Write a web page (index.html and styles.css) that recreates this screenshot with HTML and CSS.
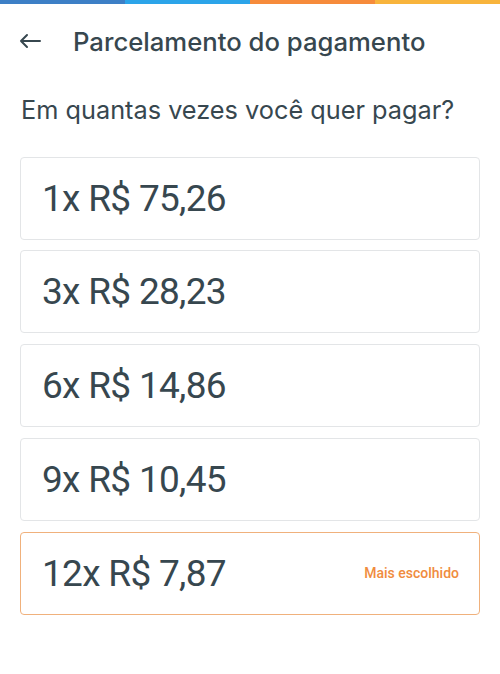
FILE: index.html
```html
<!DOCTYPE html>
<html lang="pt-BR">
<head>
    <meta charset="UTF-8">
    <meta name="viewport" content="width=device-width, initial-scale=1.0">
    <title>Parcelamento do pagamento</title>
    <link rel="stylesheet" href="styles.css">
</head>
<body>
    <div class="progress">
        <span class="seg seg-1"></span>
        <span class="seg seg-2"></span>
        <span class="seg seg-3"></span>
        <span class="seg seg-4"></span>
    </div>
    <header class="header">
        <button class="back" aria-label="Voltar">
            <svg width="22" height="22" viewBox="0 0 22 22">
                <path d="M21 11H2M8 5l-6 6 6 6" fill="none" stroke="#37474f" stroke-width="2" stroke-linecap="round" stroke-linejoin="round"/>
            </svg>
        </button>
        <h1 class="title">Parcelamento do pagamento</h1>
    </header>
    <main class="content">
        <h2 class="question">Em quantas vezes você quer pagar?</h2>
        <div class="options">
            <div class="option"><span class="amount">1x R$ 75,26</span></div>
            <div class="option"><span class="amount">3x R$ 28,23</span></div>
            <div class="option"><span class="amount">6x R$ 14,86</span></div>
            <div class="option"><span class="amount">9x R$ 10,45</span></div>
            <div class="option featured">
                <span class="amount">12x R$ 7,87</span>
                <span class="tag">Mais escolhido</span>
            </div>
        </div>
    </main>
</body>
</html>
```

FILE: styles.css
```css
body {
    margin: 0;
    font-family: Roboto, "Noto Sans", sans-serif;
    color: #37474f;
    background-color: #fff;
}
.progress {
    display: flex;
    height: 4px;
}
.seg {
    flex: 1;
}
.seg-1 { background-color: #3d7fc6; }
.seg-2 { background-color: #2ba4e9; }
.seg-3 { background-color: #f68b3b; }
.seg-4 { background-color: #f8b43c; }
.header {
    display: flex;
    align-items: center;
    height: 74px;
    padding: 0 0 0 19px;
}
.back {
    display: flex;
    padding: 0;
    border: none;
    background: none;
    margin-right: 32px;
}
.title {
    margin: 0;
    font-family: Inter, Roboto, sans-serif;
    font-size: 25.7px;
    font-weight: 500;
}
.content {
    padding: 16px 20px 0 20px;
}
.question {
    margin: 0 0 31.5px 1px;
    font-family: Inter, Roboto, sans-serif;
    font-size: 25.3px;
    font-weight: 400;
}
.options {
    display: flex;
    flex-direction: column;
    gap: 10.75px;
}
.option {
    display: flex;
    align-items: center;
    justify-content: space-between;
    height: 81px;
    padding: 0 20px 0 21px;
    border: 1px solid #e3e5e7;
    border-radius: 4px;
}
.option.featured {
    border-color: #f0b17c;
}
.amount {
    font-size: 37px;
    letter-spacing: -0.7px;
}
.tag {
    font-size: 14px;
    font-weight: 500;
    color: #f08c3e;
}
```
